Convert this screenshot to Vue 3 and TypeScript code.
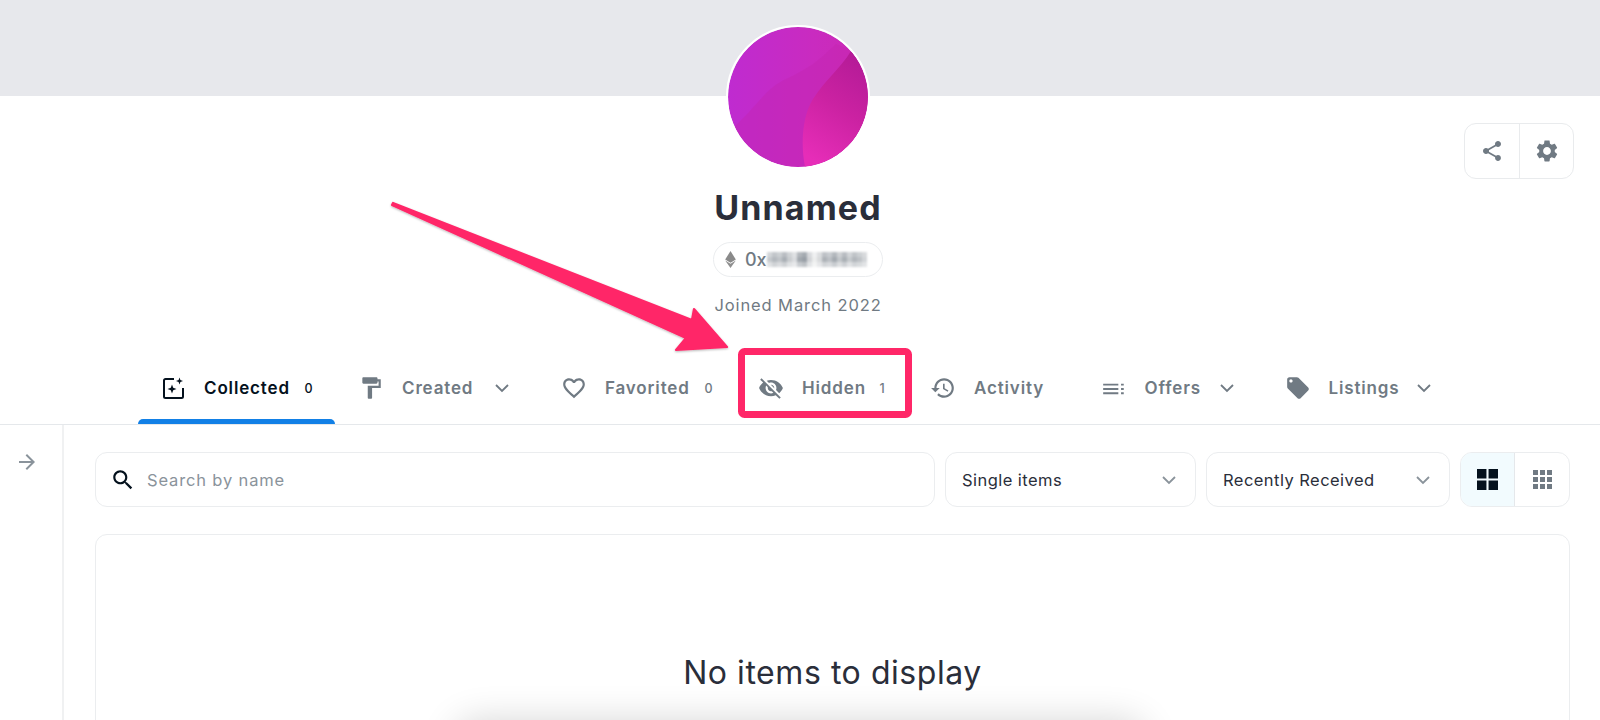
<script setup lang="ts">
interface Tab {
  label: string;
  width: number;
  labelWidth: number;
  count?: string;
  chevron?: boolean;
  active?: boolean;
  fill?: string;
  stroke?: string;
  extra?: string;
}
const tabs: Tab[] = [
  { label: 'Collected', width: 198, labelWidth: 87, count: '0', active: true, stroke: 'M14 4H5.5A1.5 1.5 0 0 0 4 5.5v16A1.5 1.5 0 0 0 5.5 23h16a1.5 1.5 0 0 0 1.5-1.5V13', extra: 'M12 9.5l1.2 3.3 3.3 1.2-3.3 1.2-1.2 3.3-1.2-3.3-3.3-1.2 3.3-1.2zM19.5 2.5l.9 2.6 2.6.9-2.6.9-.9 2.6-.9-2.6-2.6-.9 2.6-.9z' },
  { label: 'Created', width: 203, labelWidth: 73, chevron: true, fill: 'M18 4V3c0-.55-.45-1-1-1H5c-.55 0-1 .45-1 1v4c0 .55.45 1 1 1h12c.55 0 1-.45 1-1V6h1v4H9v11c0 .55.45 1 1 1h2c.55 0 1-.45 1-1v-9h8V4h-3z' },
  { label: 'Favorited', width: 197, labelWidth: 86, count: '0', fill: 'M16.5 3c-1.74 0-3.41.81-4.5 2.09C10.91 3.81 9.24 3 7.5 3 4.42 3 2 5.42 2 8.5c0 3.78 3.4 6.86 8.55 11.54L12 21.35l1.45-1.32C18.6 15.36 22 12.28 22 8.5 22 5.42 19.58 3 16.5 3zm-4.4 15.55l-.1.1-.1-.1C7.14 14.24 4 11.39 4 8.5 4 6.5 5.5 5 7.5 5c1.54 0 3.04.99 3.57 2.36h1.87C13.46 5.99 14.96 5 16.5 5c2 0 3.5 1.5 3.5 3.5 0 2.89-3.14 5.74-7.9 10.05z' },
  { label: 'Hidden', width: 172, labelWidth: 64, count: '1', fill: 'M12 7c2.76 0 5 2.24 5 5 0 .65-.13 1.26-.36 1.83l2.92 2.92c1.51-1.26 2.7-2.89 3.43-4.75-1.73-4.39-6-7.5-11-7.5-1.4 0-2.74.25-3.98.7l2.16 2.16C10.74 7.13 11.35 7 12 7zM2 4.27l2.28 2.28.46.46C3.08 8.3 1.78 10.02 1 12c1.73 4.39 6 7.5 11 7.5 1.55 0 3.03-.3 4.38-.84l.42.42L19.73 22 21 20.73 3.27 3 2 4.27zM7.53 9.8l1.55 1.55c-.05.21-.08.43-.08.65 0 1.66 1.34 3 3 3 .22 0 .44-.03.65-.08l1.55 1.55c-.67.33-1.41.53-2.2.53-2.76 0-5-2.24-5-5 0-.79.2-1.53.53-2.2zm4.31-.78l3.15 3.15.02-.16c0-1.66-1.34-3-3-3l-.17.01z' },
  { label: 'Activity', width: 170.5, labelWidth: 69, fill: 'M13 3c-4.97 0-9 4.03-9 9H1l3.89 3.89.07.14L9 12H6c0-3.87 3.13-7 7-7s7 3.13 7 7-3.13 7-7 7c-1.93 0-3.68-.79-4.94-2.06l-1.42 1.42C8.27 19.99 10.51 21 13 21c4.97 0 9-4.03 9-9s-4.03-9-9-9zm-1 5v5l4.28 2.54.72-1.21-3.5-2.08V8H12z' },
  { label: 'Offers', width: 184, labelWidth: 55, chevron: true, fill: 'M2 8h14v1.8H2zM2 12h14v1.8H2zM2 16h14v1.8H2zM18.5 8H21v1.8h-2.5zM18.5 12H21v1.8h-2.5zM18.5 16H21v1.8h-2.5z' },
  { label: 'Listings', width: 190, labelWidth: 68, chevron: true, fill: 'M21.41 11.58l-9-9C12.05 2.22 11.55 2 11 2H4c-1.1 0-2 .9-2 2v7c0 .55.22 1.05.59 1.42l9 9c.36.36.86.58 1.41.58.55 0 1.05-.22 1.41-.59l7-7c.37-.36.59-.86.59-1.41 0-.55-.23-1.06-.59-1.42zM5.5 7C4.67 7 4 6.33 4 5.5S4.67 4 5.5 4 7 4.67 7 5.5 6.33 7 5.5 7z' },
];

const mosaicRows = [
  ['#d3d6d9','#c2c6ca','#ccd0d3','#b9bdc2','#d0d3d6','#dfe1e3','#b2b7bc','#a5abb1','#d8dadd','#eff0f1','#dcdee0','#bdc1c6','#c8ccd0','#b3b8bd','#ced1d4','#b8bcc1','#d2d5d8','#c0c4c8','#ccd0d3','#d8dadc'],
  ['#c5c9cd','#b4b9be','#c0c4c8','#a9afb5','#c9cccf','#dadcdf','#a3a9af','#989fa6','#d2d4d7','#eceded','#d8dadc','#adb2b7','#bcc0c5','#a4aab0','#c2c6ca','#aab0b5','#c6cacd','#b2b7bc','#bec2c6','#d2d5d8'],
  ['#dfe1e3','#d0d3d6','#dadcdf','#ced1d4','#e0e2e4','#e8e9eb','#c8ccd0','#bec2c6','#e2e4e6','#f3f4f4','#e6e7e9','#d2d5d8','#d8dadd','#c9cdd1','#dcdee0','#cdd0d4','#e0e2e4','#d2d5d8','#d8dbdd','#e2e4e6'],
];
const mosaic = mosaicRows.flat();
</script>

<template>
  <div class="page">
    <div class="banner"></div>

    <header class="profile">
      <div class="profile-side"></div>
      <div class="profile-center">
        <div class="avatar">
          <svg viewBox="0 0 140 140" width="140" height="140">
            <defs>
              <linearGradient id="base" x1="0" y1="0.5" x2="1" y2="0.5">
                <stop offset="0" stop-color="#bf2bd0" />
                <stop offset="0.6" stop-color="#c92bc0" />
                <stop offset="1" stop-color="#cc2ab4" />
              </linearGradient>
              <linearGradient id="wave" x1="0.8" y1="0" x2="0.4" y2="1">
                <stop offset="0" stop-color="#b21a96" />
                <stop offset="0.5" stop-color="#cb22a2" />
                <stop offset="1" stop-color="#e62db8" />
              </linearGradient>
              <clipPath id="round"><circle cx="70" cy="70" r="70" /></clipPath>
            </defs>
            <g clip-path="url(#round)">
              <rect width="140" height="140" fill="url(#base)" />
              <path d="M108 17C92 32 84 40 58 52C36 62 28 82 0 105V140H140V30Z" fill="#c426b0" opacity=".4" />
              <path d="M123 24C112 42 98 52 85 72C74 90 72 118 78 145H145V40Z" fill="url(#wave)" />
            </g>
          </svg>
        </div>
        <h1 class="name">Unnamed</h1>
        <div class="address">
          <svg class="eth" viewBox="0 0 10 16" width="11" height="17">
            <path d="M5 0L0 8l5 3 5-3z" fill="#8a8a8a" />
            <path d="M5 12L0 9l5 7 5-7z" fill="#8f8f8f" />
          </svg>
          <span class="hex">0x</span>
          <span class="mosaic"><i v-for="(c, i) in mosaic" :key="i" :style="{ background: c }"></i></span>
        </div>
        <p class="joined">Joined March 2022</p>
      </div>
      <div class="profile-side actions-wrap">
        <div class="actions">
          <button class="action">
            <svg viewBox="0 0 24 24" width="24" height="24"><path fill="#707a83" d="M18 16.08c-.76 0-1.44.3-1.96.77L8.91 12.7c.05-.23.09-.46.09-.7s-.04-.47-.09-.7l7.05-4.11c.54.5 1.25.81 2.04.81 1.66 0 3-1.34 3-3s-1.34-3-3-3-3 1.34-3 3c0 .24.04.47.09.7L8.04 9.81C7.5 9.31 6.79 9 6 9c-1.66 0-3 1.34-3 3s1.34 3 3 3c.79 0 1.5-.31 2.04-.81l7.12 4.16c-.05.21-.08.43-.08.65 0 1.61 1.31 2.92 2.92 2.92s2.92-1.31 2.92-2.92-1.31-2.92-2.92-2.92z" /></svg>
          </button>
          <button class="action">
            <svg viewBox="0 0 24 24" width="26" height="26"><path fill="#707a83" d="M19.14 12.94c.04-.3.06-.61.06-.94 0-.32-.02-.64-.07-.94l2.03-1.58c.18-.14.23-.41.12-.61l-1.92-3.32c-.12-.22-.37-.29-.59-.22l-2.39.96c-.5-.38-1.03-.7-1.62-.94l-.36-2.54c-.04-.24-.24-.41-.48-.41h-3.84c-.24 0-.43.17-.47.41l-.36 2.54c-.59.24-1.13.57-1.62.94l-2.39-.96c-.22-.08-.47 0-.59.22L2.74 8.87c-.12.21-.08.47.12.61l2.03 1.58c-.05.3-.09.63-.09.94s.02.64.07.94l-2.03 1.58c-.18.14-.23.41-.12.61l1.92 3.32c.12.22.37.29.59.22l2.39-.96c.5.38 1.03.7 1.62.94l.36 2.54c.05.24.24.41.48.41h3.84c.24 0 .44-.17.47-.41l.36-2.54c.59-.24 1.13-.56 1.62-.94l2.39.96c.22.08.47 0 .59-.22l1.92-3.32c.12-.22.07-.47-.12-.61l-2.01-1.58zM12 15.6c-1.98 0-3.6-1.62-3.6-3.6s1.62-3.6 3.6-3.6 3.6 1.62 3.6 3.6-1.62 3.6-3.6 3.6z" /></svg>
          </button>
        </div>
      </div>
    </header>

    <nav class="tabs">
      <a v-for="t in tabs" :key="t.label" class="tab" :class="{ active: t.active }" :style="{ width: t.width + 'px' }">
        <svg class="tab-icon" viewBox="0 0 26 26" width="26" height="26" v-if="t.stroke">
          <path :d="t.stroke" fill="none" stroke="#04111d" stroke-width="2" />
          <path :d="t.extra" fill="#04111d" />
        </svg>
        <svg class="tab-icon" viewBox="0 0 24 24" width="26" height="26" v-else>
          <path :d="t.fill" fill="#707a83" />
        </svg>
        <span class="tab-label" :style="{ width: t.labelWidth + 'px' }">{{ t.label }}</span>
        <span v-if="t.count" class="tab-count">{{ t.count }}</span>
        <svg v-if="t.chevron" class="tab-chevron" viewBox="0 0 20 20" width="20" height="20">
          <polyline points="4,7 10,13 16,7" fill="none" stroke="#707a83" stroke-width="1.8" />
        </svg>
      </a>
    </nav>

    <div class="body">
      <aside class="sidebar">
        <svg viewBox="0 0 24 24" width="24" height="24"><path fill="#8a939b" d="M12 4l-1.41 1.41L16.17 11H4v2h12.17l-5.58 5.59L12 20l8-8z" /></svg>
      </aside>
      <main class="main">
        <div class="toolbar">
          <label class="search">
            <svg viewBox="0 0 24 24" width="26" height="26"><path fill="#04111d" d="M15.5 14h-.79l-.28-.27C15.41 12.59 16 11.11 16 9.5 16 5.91 13.09 3 9.5 3S3 5.91 3 9.5 5.91 16 9.5 16c1.61 0 3.09-.59 4.23-1.57l.27.28v.79l5 4.99L20.49 19l-4.99-5zm-6 0C7.01 14 5 11.99 5 9.5S7.01 5 9.5 5 14 7.01 14 9.5 11.99 14 9.5 14z" /></svg>
            <span class="placeholder">Search by name</span>
          </label>
          <div class="select select-a">
            <span>Single items</span>
            <svg viewBox="0 0 20 20" width="20" height="20"><polyline points="4,7 10,13 16,7" fill="none" stroke="#8a939b" stroke-width="1.8" /></svg>
          </div>
          <div class="select select-b">
            <span>Recently Received</span>
            <svg viewBox="0 0 20 20" width="20" height="20"><polyline points="4,7 10,13 16,7" fill="none" stroke="#8a939b" stroke-width="1.8" /></svg>
          </div>
          <div class="toggle">
            <div class="toggle-btn on">
              <svg viewBox="0 0 20 20" width="21" height="21"><path fill="#04111d" d="M0 0h9v9H0zM11 0h9v9h-9zM0 11h9v9H0zM11 11h9v9h-9z" /></svg>
            </div>
            <div class="toggle-btn">
              <svg viewBox="0 0 19 19" width="19" height="19"><path fill="#707a83" d="M0 0h5v5H0zM7 0h5v5H7zM14 0h5v5h-5zM0 7h5v5H0zM7 7h5v5H7zM14 7h5v5h-5zM0 14h5v5H0zM7 14h5v5H7zM14 14h5v5h-5z" /></svg>
            </div>
          </div>
        </div>
        <section class="empty">
          <h2>No items to display</h2>
        </section>
      </main>
    </div>

    <div class="toast-shadow"></div>

    <svg class="annotation" viewBox="0 0 1600 720" width="1600" height="720">
      <defs>
        <filter id="soft" x="-5%" y="-5%" width="110%" height="115%">
          <feDropShadow dx="0" dy="1" stdDeviation="0.8" flood-color="#000" flood-opacity=".28" />
        </filter>
      </defs>
      <polygon filter="url(#soft)" points="393,203 692,320 694,309 727,347 676,350 686,338 392,205" fill="#ff2768" stroke="#ff2768" stroke-width="2.2" stroke-linejoin="round" />
      <rect x="741.5" y="351.5" width="167" height="63" rx="3" fill="none" stroke="#ff2768" stroke-width="7" />
    </svg>
  </div>
</template>

<style>
html, body { margin: 0; overflow: hidden; background: #fff; }
</style>

<style scoped>
.page {
  position: relative;
  width: 1600px;
  height: 720px;
  overflow: hidden;
  background: #fff;
  font-family: Inter, "Liberation Sans", sans-serif;
  color: #04111d;
}
.banner { height: 96px; background: #e7e8ec; }
.profile {
  display: grid;
  grid-template-columns: 1fr auto 1fr;
  padding-right: 4px;
  height: 256px;
}
.profile-center {
  display: flex;
  flex-direction: column;
  align-items: center;
  margin-top: -71px;
}
.avatar {
  width: 140px;
  height: 140px;
  border: 2px solid #fff;
  border-radius: 50%;
  overflow: hidden;
  flex: none;
}
.avatar svg { display: block; }
.name {
  margin: 18px 0 0;
  font-size: 34px;
  line-height: 42px;
  font-weight: 700;
  letter-spacing: 1.1px;
  color: #2a2e3a;
}
.address {
  display: flex;
  align-items: center;
  box-sizing: border-box;
  width: 170px;
  height: 35px;
  margin-top: 13px;
  padding-left: 11px;
  border: 1px solid #ebedef;
  border-radius: 18px;
}
.eth { flex: none; }
.hex { margin-left: 9px; font-size: 18px; font-weight: 500; color: #707a83; }
.mosaic {
  display: grid;
  grid-template-columns: repeat(20, 5px);
  grid-auto-rows: 5px;
  filter: blur(1px);
}
.joined {
  margin: 16px 0 0;
  font-size: 16.5px;
  line-height: 24px;
  letter-spacing: 0.9px;
  color: #707a83;
  white-space: nowrap;
}
.actions-wrap { display: flex; justify-content: flex-end; }
.actions {
  display: flex;
  height: 56px;
  margin: 27px 22px 0 0;
  box-sizing: border-box;
  border: 1px solid #e9ebed;
  border-radius: 12px;
}
.action {
  display: flex;
  align-items: center;
  justify-content: center;
  width: 54px;
  padding: 0;
  border: 0;
  background: none;
}
.action + .action { border-left: 1px solid #e9ebed; }

.tabs {
  display: flex;
  height: 73px;
  box-sizing: border-box;
  padding-left: 138px;
  border-bottom: 1px solid #e5e8eb;
}
.tab {
  position: relative;
  display: flex;
  align-items: center;
  box-sizing: border-box;
  height: 72px;
  padding-left: 22px;
  flex: none;
  font-size: 17px;
  font-weight: 600;
  color: #707a83;
}
.tab.active { color: #04111d; }
.tab.active::after {
  content: "";
  position: absolute;
  left: 0;
  right: 1px;
  bottom: 0;
  height: 5px;
  border-radius: 5px 5px 0 0;
  background: #1280e6;
}
.tab-icon { flex: none; margin-right: 18px; }
.tab-label { flex: none; white-space: nowrap; letter-spacing: 0.85px; }
.tab-count { margin-left: 13.5px; font-size: 12.5px; font-weight: 500; }
.tab-chevron { margin-left: 17px; }

.body { display: flex; height: 295px; }
.sidebar {
  flex: none;
  box-sizing: border-box;
  width: 64px;
  padding: 25px 0 0 15px;
  border-right: 2px solid #f0f1f2;
}
.sidebar svg { display: block; }
.main { flex: none; width: 1475px; margin-left: 31px; padding-top: 27px; }
.toolbar { display: flex; gap: 10px; height: 55px; }
.search, .select, .toggle {
  box-sizing: border-box;
  height: 55px;
  border: 1px solid #ebedef;
  border-radius: 12px;
}
.search {
  display: flex;
  align-items: center;
  flex: none;
  width: 840px;
  padding-left: 14px;
}
.placeholder {
  margin-left: 11px;
  font-size: 16.5px;
  letter-spacing: 0.85px;
  color: #8a939b;
}
.select {
  display: flex;
  align-items: center;
  justify-content: space-between;
  flex: none;
  padding: 0 16px;
  font-size: 16.5px;
  letter-spacing: 0.45px;
  color: #2a2e3a;
}
.select-a { width: 251px; }
.select-b { width: 244px; }
.toggle { display: flex; flex: none; width: 110px; overflow: hidden; }
.toggle-btn {
  display: flex;
  align-items: center;
  justify-content: center;
  box-sizing: border-box;
  flex: none;
  width: 54px;
}
.toggle-btn.on { background: #f2fbfe; border-right: 1px solid #e5e8eb; }
.empty {
  box-sizing: border-box;
  height: 400px;
  margin-top: 27px;
  padding-top: 116px;
  border: 1px solid #ebedef;
  border-radius: 12px;
  text-align: center;
}
.empty h2 {
  margin: 0;
  font-size: 32px;
  line-height: 44px;
  font-weight: 400;
  letter-spacing: 0.55px;
  color: #2a2e3a;
}
.toast-shadow {
  position: absolute;
  left: 465px;
  top: 730px;
  width: 670px;
  height: 60px;
  border-radius: 12px;
  box-shadow: 0 0 36px 10px rgba(0, 0, 0, 0.16);
}
.annotation { position: absolute; left: 0; top: 0; pointer-events: none; }
</style>
